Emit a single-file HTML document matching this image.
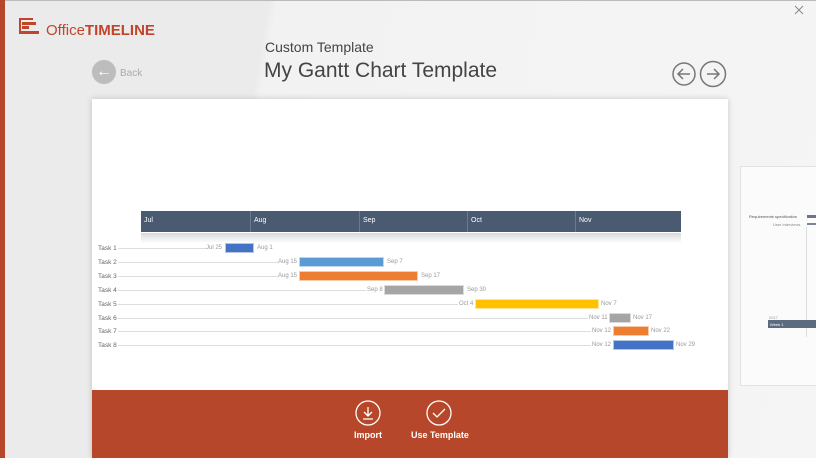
<!DOCTYPE html>
<html><head><meta charset="utf-8"><style>
*{margin:0;padding:0;box-sizing:border-box}
body{width:816px;height:458px;overflow:hidden;font-family:"Liberation Sans",sans-serif;position:relative;background:#f3f3f3}
.a{position:absolute}
.lbl{position:absolute;font-size:6.5px;color:#666}
.dl{position:absolute;font-size:6px;color:#999}
.ln{position:absolute;height:1px;background:#ddd}
.bar{position:absolute;height:10px;border:1px solid rgba(255,255,255,.6)}
.mo{position:absolute;top:0;height:21px;border-left:1px solid #6a7a90;color:#fff;font-size:7px;padding:6px 0 0 3px}
.rows{position:absolute;left:0;top:2px;width:816px;height:400px}
</style></head><body>
<div class="a" style="left:0;top:0;width:816px;height:458px;background:linear-gradient(100deg,#ebebeb 0,#ebebeb 30%,#f2f2f2 31%,#f5f5f5 100%)"></div>
<div class="a" style="left:0;top:0;width:816px;height:1px;background:#bbb"></div>
<div class="a" style="left:0;top:0;width:5px;height:458px;background:#b7472a"></div>
<div class="a" style="left:19px;top:18px;width:20px;height:16px">
<div class="a" style="left:0;top:0;width:2px;height:16px;background:#c0452a"></div>
<div class="a" style="left:0;top:0;width:14px;height:2px;background:#c0452a"></div>
<div class="a" style="left:3px;top:4px;width:14px;height:3px;background:#c0452a"></div>
<div class="a" style="left:3px;top:8px;width:7px;height:3px;background:#c0452a"></div>
<div class="a" style="left:0;top:13px;width:20px;height:3px;background:#c0452a"></div>
</div>
<div class="a" style="left:46px;top:22px;font-size:15px;color:#c0452a">Office<b style="font-weight:bold">TIMELINE</b></div>
<div class="a" style="left:92px;top:60px;width:24px;height:24px;border-radius:50%;background:#bdbdbd;color:#fff;font-size:16px;text-align:center;line-height:23px">&#8592;</div>
<div class="a" style="left:120px;top:68px;font-size:10px;color:#aaa">Back</div>
<div class="a" style="left:265px;top:39px;font-size:14px;color:#444">Custom Template</div>
<div class="a" style="left:264px;top:59px;font-size:21px;color:#444">My Gantt Chart Template</div>
<svg class="a" style="left:670px;top:59px" width="60" height="30"><g fill="none" stroke="#777" stroke-width="1.5"><circle cx="14" cy="15" r="11"/><circle cx="43" cy="15" r="12.5"/><path d="M8 15h12M13 10l-5 5 5 5M37 15h12M44 10l5 5-5 5"/></g></svg>
<svg class="a" style="left:793px;top:4px" width="12" height="12"><path d="M2 2l8 8M10 2l-8 8" stroke="#888" stroke-width="1"/></svg>
<div class="a" style="left:740px;top:166px;width:80px;height:220px;background:#fbfbfb;border:1px solid #e2e2e2">
<div class="a" style="left:8px;top:47px;font-size:4px;color:#555">Requirements specification</div>
<div class="a" style="left:66px;top:48px;width:12px;height:3px;background:#6a7585"></div>
<div class="a" style="left:32px;top:55px;font-size:4px;color:#888">User interviews</div>
<div class="a" style="left:66px;top:56px;width:12px;height:2px;background:#7a8595"></div>
<div class="a" style="left:65px;top:60px;width:1px;height:110px;background:#ddd"></div>
<div class="a" style="left:28px;top:148px;font-size:4px;color:#999">2017</div>
<div class="a" style="left:27px;top:153px;width:60px;height:8px;background:#5d6b80;color:#fff;font-size:4px;padding:2px">Week 1</div>
</div>
<div class="a" style="left:92px;top:99px;width:636px;height:359px;background:#fff;box-shadow:0 0 6px rgba(0,0,0,.18)"></div>
<div class="a" style="left:141px;top:211px;width:540px;height:21px;background:#4a5a70">
<div class="mo" style="left:0;border:none">Jul</div><div class="mo" style="left:109px">Aug</div><div class="mo" style="left:218px">Sep</div><div class="mo" style="left:326px">Oct</div><div class="mo" style="left:434px">Nov</div>
</div>
<div class="a" style="left:141px;top:233px;width:540px;height:10px;background:linear-gradient(#d5d8dc,#fff)"></div>
<div class="rows">
<div class="lbl" style="left:98px;top:243px">Task 1</div><div class="ln" style="left:118px;top:246px;width:88px"></div><div class="dl" style="left:206px;top:243px">Jul 25</div><div class="bar" style="left:225px;top:241px;width:29px;background:#4472c4"></div><div class="dl" style="left:257px;top:243px">Aug 1</div>
<div class="lbl" style="left:98px;top:257px">Task 2</div><div class="ln" style="left:118px;top:260px;width:160px"></div><div class="dl" style="left:278px;top:257px">Aug 15</div><div class="bar" style="left:299px;top:255px;width:85px;background:#5b9bd5"></div><div class="dl" style="left:387px;top:257px">Sep 7</div>
<div class="lbl" style="left:98px;top:271px">Task 3</div><div class="ln" style="left:118px;top:274px;width:160px"></div><div class="dl" style="left:278px;top:271px">Aug 15</div><div class="bar" style="left:299px;top:269px;width:119px;background:#ed7d31"></div><div class="dl" style="left:421px;top:271px">Sep 17</div>
<div class="lbl" style="left:98px;top:285px">Task 4</div><div class="ln" style="left:118px;top:288px;width:248px"></div><div class="dl" style="left:367px;top:285px">Sep 8</div><div class="bar" style="left:384px;top:283px;width:80px;background:#a5a5a5"></div><div class="dl" style="left:467px;top:285px">Sep 30</div>
<div class="lbl" style="left:98px;top:299px">Task 5</div><div class="ln" style="left:118px;top:302px;width:340px"></div><div class="dl" style="left:459px;top:299px">Oct 4</div><div class="bar" style="left:475px;top:297px;width:124px;background:#ffc000"></div><div class="dl" style="left:601px;top:299px">Nov 7</div>
<div class="lbl" style="left:98px;top:313px">Task 6</div><div class="ln" style="left:118px;top:316px;width:470px"></div><div class="dl" style="left:589px;top:313px">Nov 11</div><div class="bar" style="left:609px;top:311px;width:22px;background:#a5a5a5"></div><div class="dl" style="left:633px;top:313px">Nov 17</div>
<div class="lbl" style="left:98px;top:326px">Task 7</div><div class="ln" style="left:118px;top:329px;width:473px"></div><div class="dl" style="left:592px;top:326px">Nov 12</div><div class="bar" style="left:613px;top:324px;width:36px;background:#ed7d31"></div><div class="dl" style="left:651px;top:326px">Nov 22</div>
<div class="lbl" style="left:98px;top:340px">Task 8</div><div class="ln" style="left:118px;top:343px;width:473px"></div><div class="dl" style="left:592px;top:340px">Nov 12</div><div class="bar" style="left:613px;top:338px;width:61px;background:#4472c4"></div><div class="dl" style="left:676px;top:340px">Nov 29</div>
</div>
<div class="a" style="left:92px;top:390px;width:636px;height:68px;background:#b7472a"></div>
<svg class="a" style="left:355px;top:400px" width="28" height="28"><g fill="none" stroke="#fff" stroke-width="1.3"><circle cx="13" cy="13" r="12"/><path d="M13 7v9M9 12l4 4 4-4M8 19h10"/></g></svg>
<svg class="a" style="left:426px;top:400px" width="28" height="28"><g fill="none" stroke="#fff" stroke-width="1.3"><circle cx="13" cy="13" r="12"/><path d="M7 13l4 4 8-8"/></g></svg>
<div class="a" style="left:354px;top:430px;font-size:9px;color:#fff;font-weight:bold">Import</div>
<div class="a" style="left:411px;top:430px;font-size:9px;color:#fff;font-weight:bold">Use Template</div>
</body></html>
